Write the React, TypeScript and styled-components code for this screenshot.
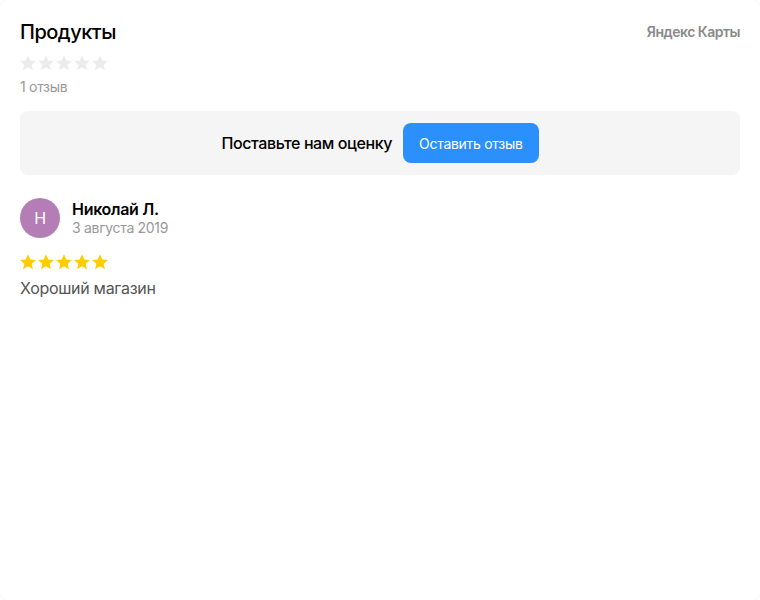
import styled, { createGlobalStyle } from 'styled-components';

const GlobalStyle = createGlobalStyle`
	html, body {
		margin: 0;
		padding: 0;
		background: #ffffff;
	}
	* {
		box-sizing: border-box;
	}
`;

const StarIcon = ({ color }: { color: string }) => (
	<svg width="16" height="16" viewBox="1.2 1.2 21.6 21.6">
		<path
			fill={color}
			d="M12 1.5l3.1 7.1 7.6.7-5.8 5 1.8 7.6L12 17.9l-6.7 4 1.8-7.6-5.8-5 7.6-.7z"
		/>
	</svg>
);

const Stars = ({ value, $gapTop }: { value: number; $gapTop: number }) => (
	<StarsRow $gapTop={$gapTop}>
		{[0, 1, 2, 3, 4].map((i) => (
			<StarIcon key={i} color={i < value ? '#fc0' : '#ececec'} />
		))}
	</StarsRow>
);

export default function App() {
	return (
		<>
			<GlobalStyle />
			<Card>
				<Header>
					<div>
						<Title>Продукты</Title>
						<Stars value={0} $gapTop={11} />
						<Count>1 отзыв</Count>
					</div>
					<Brand>Яндекс Карты</Brand>
				</Header>
				<RateBox>
					<RateText>Поставьте нам оценку</RateText>
					<RateButton>Оставить отзыв</RateButton>
				</RateBox>
				<Review>
					<Author>
						<Avatar $color="#b57db5">Н</Avatar>
						<div>
							<AuthorName>Николай Л.</AuthorName>
							<ReviewDate>3 августа 2019</ReviewDate>
						</div>
					</Author>
					<Stars value={5} $gapTop={16} />
					<ReviewText>Хороший магазин</ReviewText>
				</Review>
			</Card>
		</>
	);
}

const Card = styled.div`
	width: 760px;
	height: 600px;
	padding: 20px;
	background: #fff;
	border-radius: 8px;
	box-shadow: 0 0 2px rgba(0, 0, 0, 0.08);
	font-family: Inter, 'Noto Sans', sans-serif;
	color: #000;
	letter-spacing: -0.3px;
`;

const Header = styled.div`
	display: flex;
	justify-content: space-between;
	align-items: flex-start;
`;

const Title = styled.h1`
	margin: 0;
	font-size: 20px;
	line-height: 24px;
	font-weight: 500;
	letter-spacing: -0.5px;
`;

const Brand = styled.div`
	font-size: 14px;
	line-height: 24px;
	font-weight: 600;
	color: #8a8a8a;
	letter-spacing: -0.5px;
`;

const StarsRow = styled.div<{ $gapTop: number }>`
	display: flex;
	gap: 2px;
	margin-top: ${({ $gapTop }) => $gapTop}px;
	height: 16px;
`;

const Count = styled.div`
	margin-top: 8px;
	font-size: 14px;
	line-height: 16px;
	color: #999;
`;

const RateBox = styled.div`
	margin-top: 16px;
	height: 64px;
	border-radius: 8px;
	background: #f5f5f5;
	display: flex;
	align-items: center;
	justify-content: center;
	gap: 11px;
`;

const RateText = styled.span`
	font-size: 16px;
	font-weight: 500;
	letter-spacing: -0.4px;
`;

const RateButton = styled.button`
	height: 40px;
	padding: 0 16px;
	border: none;
	border-radius: 8px;
	background: #2b8ffc;
	color: #fff;
	font-family: inherit;
	font-size: 14px;
	letter-spacing: -0.3px;
	cursor: pointer;
`;

const Review = styled.div`
	margin-top: 23px;
`;

const Author = styled.div`
	display: flex;
	align-items: center;
	gap: 12px;
`;

const Avatar = styled.div<{ $color: string }>`
	width: 40px;
	height: 40px;
	border-radius: 50%;
	background: ${({ $color }) => $color};
	color: #fff;
	display: flex;
	align-items: center;
	justify-content: center;
	font-size: 16px;
`;

const AuthorName = styled.div`
	font-size: 16px;
	line-height: 20px;
	font-weight: 600;
`;

const ReviewDate = styled.div`
	font-size: 14px;
	line-height: 18px;
	color: #999;
`;

const ReviewText = styled.div`
	margin-top: 8px;
	font-size: 16px;
	line-height: 20px;
	color: #555;
`;
